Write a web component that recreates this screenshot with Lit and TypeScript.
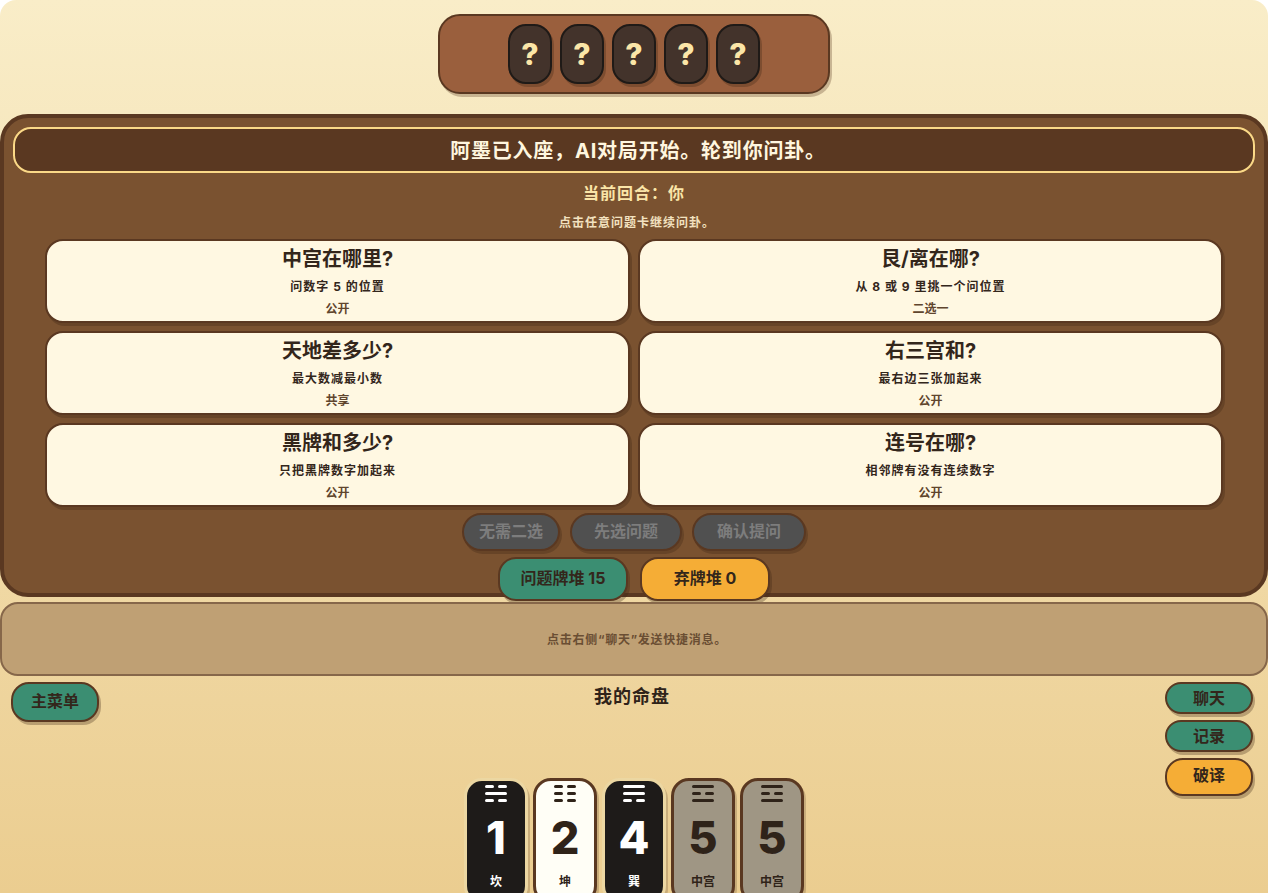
import { LitElement, html, css } from "lit";
import { customElement } from "lit/decorators.js";

type Tile = { n: string; name: string; tone: string; lines: number[] };

const QUESTIONS = [
  ["中宫在哪里?", "问数字 5 的位置", "公开"],
  ["艮/离在哪?", "从 8 或 9 里挑一个问位置", "二选一"],
  ["天地差多少?", "最大数减最小数", "共享"],
  ["右三宫和?", "最右边三张加起来", "公开"],
  ["黑牌和多少?", "只把黑牌数字加起来", "公开"],
  ["连号在哪?", "相邻牌有没有连续数字", "公开"],
];

const TILES: Tile[] = [
  { n: "1", name: "坎", tone: "black", lines: [0, 1, 0] },
  { n: "2", name: "坤", tone: "white", lines: [0, 0, 0] },
  { n: "4", name: "巽", tone: "black", lines: [1, 1, 0] },
  { n: "5", name: "中宫", tone: "grey", lines: [1, 0, 1] },
  { n: "5", name: "中宫", tone: "grey", lines: [1, 0, 1] },
];

@customElement("app-root")
export class AppRoot extends LitElement {
  static styles = css`
    :host {
      display: block;
      width: 1268px;
      height: 893px;
      overflow: hidden;
      font-family: Inter, "Noto Sans CJK SC", sans-serif;
      color: #33261b;
    }
    * { box-sizing: border-box; }
    .page {
      height: 893px;
      overflow: hidden;
      border-radius: 16px 16px 0 0;
      background: linear-gradient(180deg, #f9edc8 0%, #ebcd90 100%);
      display: flex;
      flex-direction: column;
      align-items: stretch;
      padding-top: 14px;
    }
    .top {
      align-self: center;
      flex: none;
      width: 392px;
      height: 80px;
      background: #9a5f3d;
      border: 2px solid #5a3821;
      border-radius: 22px;
      box-shadow: 2px 3px 0 rgba(90, 56, 33, 0.3);
      display: flex;
      justify-content: center;
      align-items: center;
      gap: 8px;
    }
    .hidden {
      width: 44px;
      height: 60px;
      background: #43332b;
      border: 2px solid #1f1a17;
      border-radius: 18px;
      box-shadow: 2px 3px 0 rgba(60, 35, 20, 0.3);
      color: #fbe6a8;
      font-size: 30px;
      font-weight: 800;
      display: flex;
      align-items: center;
      justify-content: center;
    }
    .board {
      margin-top: 20px;
      flex: none;
      height: 483px;
      background: #7a5230;
      border: 4px solid #5a3821;
      border-radius: 28px;
      padding: 9px 9px 0;
      display: flex;
      flex-direction: column;
      align-items: center;
    }
    .banner {
      width: 100%;
      height: 46px;
      flex: none;
      background: #5a3821;
      border: 2px solid #fbd987;
      border-radius: 18px;
      color: #fff6df;
      font-size: 20px;
      font-weight: 700;
      letter-spacing: 0.8px;
      padding: 0 0 2px 8px;
      display: flex;
      align-items: center;
      justify-content: center;
    }
    .turn {
      margin-top: 8px;
      height: 24px;
      line-height: 24px;
      color: #fbe6a8;
      font-size: 16px;
      font-weight: 700;
      letter-spacing: 1px;
    }
    .hint {
      margin-top: 10px;
      height: 16px;
      line-height: 16px;
      padding-left: 6px;
      color: #f3e2c0;
      font-size: 12px;
      font-weight: 700;
      letter-spacing: 1px;
    }
    .grid {
      margin-top: 8px;
      width: 1178px;
      display: grid;
      grid-template-columns: 1fr 1fr;
      gap: 8px;
    }
    .q {
      height: 84px;
      background: #fff8e2;
      border: 2px solid #5a3821;
      border-radius: 18px;
      box-shadow: 2px 3px 0 rgba(60, 35, 20, 0.3);
      display: flex;
      flex-direction: column;
      align-items: center;
    }
    .q b {
      margin-top: 5px;
      height: 26px;
      line-height: 26px;
      font-size: 20px;
      font-weight: 700;
    }
    .q span {
      margin-top: 6px;
      height: 18px;
      line-height: 18px;
      font-size: 12px;
      font-weight: 700;
      letter-spacing: 1px;
    }
    .q i {
      margin-top: 5px;
      height: 16px;
      line-height: 16px;
      font-size: 12px;
      font-style: normal;
      font-weight: 700;
      color: #5f452d;
    }
    .row {
      display: flex;
      justify-content: center;
      flex: none;
    }
    .r1 { margin-top: 6px; gap: 10px; }
    .r2 { margin-top: 6px; gap: 12px; }
    .btn {
      border: 2px solid #5a3821;
      box-shadow: 2px 3px 0 rgba(60, 35, 20, 0.3);
      display: flex;
      align-items: center;
      justify-content: center;
      font-weight: 700;
      font-size: 16px;
      padding-bottom: 5px;
      color: #33261b;
    }
    .off {
      height: 38px;
      border-radius: 19px;
      background: #505050;
      color: #7d7d7d;
    }
    .w1 { width: 98px; }
    .w2 { width: 112px; }
    .w3 { width: 114px; }
    .pile {
      width: 130px;
      height: 44px;
      border-radius: 18px;
    }
    .green { background: #3b8e72; }
    .amber { background: #f5ad36; }
    .msg {
      margin-top: 5px;
      height: 74px;
      flex: none;
      background: #bfa074;
      border: 2px solid #86674a;
      border-radius: 18px;
      color: #6a4e33;
      font-size: 12px;
      font-weight: 700;
      letter-spacing: 0.75px;
      padding: 0 0 2px 6px;
      display: flex;
      align-items: center;
      justify-content: center;
    }
    .mine {
      flex: 1;
      min-height: 0;
      display: grid;
      grid-template-columns: 1fr 1fr 1fr;
      padding: 6px 15px 0 11px;
    }
    .left { display: flex; align-items: flex-start; }
    .small {
      height: 40px;
      width: 88px;
      border-radius: 18px;
    }
    .center {
      display: flex;
      flex-direction: column;
      align-items: center;
    }
    .title {
      margin-top: 2px;
      height: 26px;
      line-height: 26px;
      font-size: 18px;
      font-weight: 700;
      letter-spacing: 1px;
      color: #2f2319;
    }
    .tiles {
      margin: 68px 0 0 4px;
      display: flex;
      gap: 5px;
    }
    .right {
      display: flex;
      flex-direction: column;
      align-items: flex-end;
      gap: 6px;
    }
    .side { height: 32px; width: 88px; border-radius: 16px; padding-bottom: 3px; }
    .side.amber { height: 38px; border-radius: 18px; padding-bottom: 6px; }
    .tile {
      width: 64px;
      height: 126px;
      flex: none;
      border-radius: 18px;
      border: 3px solid #ecd7a2;
      box-shadow: 2px 3px 0 rgba(60, 35, 20, 0.2);
      display: flex;
      flex-direction: column;
      align-items: center;
      padding-top: 4px;
    }
    .tile.black { background: #1e1b19; color: #fff; }
    .tile.white { background: #fffef6; color: #2f2319; border-color: #5a3821; }
    .tile.grey { background: #9f9684; color: #2f2319; border-color: #5a3821; }
    .gua {
      width: 22px;
      height: 17px;
      display: flex;
      flex-direction: column;
      justify-content: space-between;
      flex: none;
    }
    .yao { height: 3px; display: flex; justify-content: space-between; }
    .yao u { display: block; height: 3px; width: 9px; border-radius: 1.5px; background: currentColor; }
    .yao.whole u { width: 100%; }
    .num {
      margin-top: 11px;
      height: 50px;
      line-height: 50px;
      font-size: 45px;
      font-weight: 800;
    }
    .label {
      margin-top: 12px;
      font-size: 12px;
      font-weight: 700;
      line-height: 14px;
    }
  `;

  private gua(lines: number[]) {
    return html`<div class="gua">
      ${lines.map((l) =>
        l
          ? html`<div class="yao whole"><u></u></div>`
          : html`<div class="yao"><u></u><u></u></div>`
      )}
    </div>`;
  }

  render() {
    return html`<div class="page">
      <div class="top">
        ${[0, 1, 2, 3, 4].map(() => html`<div class="hidden">?</div>`)}
      </div>
      <div class="board">
        <div class="banner">阿墨已入座，AI对局开始。轮到你问卦。</div>
        <div class="turn">当前回合：你</div>
        <div class="hint">点击任意问题卡继续问卦。</div>
        <div class="grid">
          ${QUESTIONS.map(
            ([a, b, c]) => html`<div class="q"><b>${a}</b><span>${b}</span><i>${c}</i></div>`
          )}
        </div>
        <div class="row r1">
          <div class="btn off w1">无需二选</div>
          <div class="btn off w2">先选问题</div>
          <div class="btn off w3">确认提问</div>
        </div>
        <div class="row r2">
          <div class="btn pile green">问题牌堆 15</div>
          <div class="btn pile amber">弃牌堆 0</div>
        </div>
      </div>
      <div class="msg">点击右侧“聊天”发送快捷消息。</div>
      <div class="mine">
        <div class="left"><div class="btn small green">主菜单</div></div>
        <div class="center">
          <div class="title">我的命盘</div>
          <div class="tiles">
            ${TILES.map(
              (t) => html`<div class="tile ${t.tone}">
                ${this.gua(t.lines)}
                <div class="num">${t.n}</div>
                <div class="label">${t.name}</div>
              </div>`
            )}
          </div>
        </div>
        <div class="right">
          <div class="btn side green">聊天</div>
          <div class="btn side green">记录</div>
          <div class="btn side amber">破译</div>
        </div>
      </div>
    </div>`;
  }
}
